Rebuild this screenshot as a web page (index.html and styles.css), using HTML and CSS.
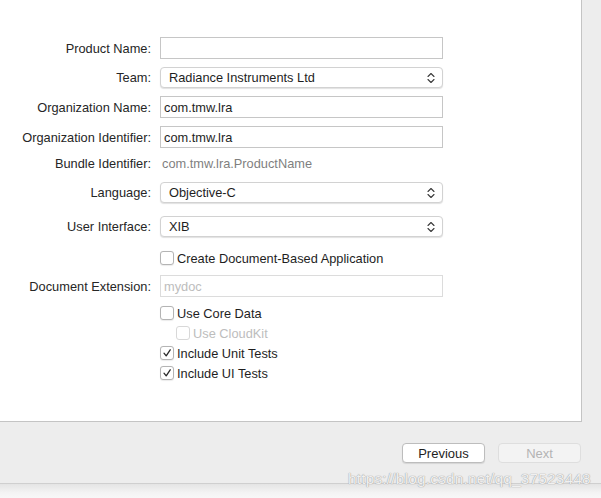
FILE: index.html
```html
<!DOCTYPE html>
<html>
<head>
<meta charset="utf-8">
<link rel="stylesheet" href="styles.css">
</head>
<body>
<div class="window">
  <div class="panel">
    <div class="form">
      <div class="row r1"><span class="label">Product Name:</span><div class="field input"></div></div>
      <div class="row r2"><span class="label">Team:</span><div class="field popup"><span>Radiance Instruments Ltd</span><svg class="arrows" width="8" height="12" viewBox="0 0 8 12"><path d="M1 4.5 L4 1.5 L7 4.5 M1 7.5 L4 10.5 L7 7.5" fill="none" stroke="#3a3a3a" stroke-width="1.1" stroke-linecap="round" stroke-linejoin="round"/></svg></div></div>
      <div class="row r3"><span class="label">Organization Name:</span><div class="field input">com.tmw.lra</div></div>
      <div class="row r4"><span class="label">Organization Identifier:</span><div class="field input">com.tmw.lra</div></div>
      <div class="row r5"><span class="label">Bundle Identifier:</span><div class="field static">com.tmw.lra.ProductName</div></div>
      <div class="row r6"><span class="label">Language:</span><div class="field popup"><span>Objective-C</span><svg class="arrows" width="8" height="12" viewBox="0 0 8 12"><path d="M1 4.5 L4 1.5 L7 4.5 M1 7.5 L4 10.5 L7 7.5" fill="none" stroke="#3a3a3a" stroke-width="1.1" stroke-linecap="round" stroke-linejoin="round"/></svg></div></div>
      <div class="row r7"><span class="label">User Interface:</span><div class="field popup"><span>XIB</span><svg class="arrows" width="8" height="12" viewBox="0 0 8 12"><path d="M1 4.5 L4 1.5 L7 4.5 M1 7.5 L4 10.5 L7 7.5" fill="none" stroke="#3a3a3a" stroke-width="1.1" stroke-linecap="round" stroke-linejoin="round"/></svg></div></div>
      <div class="row r8"><span class="label"></span><div class="check"><span class="box"></span><span>Create Document-Based Application</span></div></div>
      <div class="row r9"><span class="label">Document Extension:</span><div class="field input disabled">mydoc</div></div>
      <div class="row r10"><span class="label"></span><div class="check"><span class="box"></span><span>Use Core Data</span></div></div>
      <div class="row r11"><span class="label"></span><div class="check sub disabled"><span class="box"></span><span>Use CloudKit</span></div></div>
      <div class="row r12"><span class="label"></span><div class="check"><span class="box checked"><svg width="10" height="10" viewBox="0 0 10 10"><path d="M2 5.2 L4.2 7.8 L8.2 1.8" fill="none" stroke="#2a2a2a" stroke-width="1.3" stroke-linecap="round" stroke-linejoin="round"/></svg></span><span>Include Unit Tests</span></div></div>
      <div class="row r13"><span class="label"></span><div class="check"><span class="box checked"><svg width="10" height="10" viewBox="0 0 10 10"><path d="M2 5.2 L4.2 7.8 L8.2 1.8" fill="none" stroke="#2a2a2a" stroke-width="1.3" stroke-linecap="round" stroke-linejoin="round"/></svg></span><span>Include UI Tests</span></div></div>
    </div>
  </div>
  <div class="footer">
    <button class="btn">Previous</button>
    <button class="btn off">Next</button>
  </div>
  <div class="shade"></div>
  <div class="watermark">https://blog.csdn.net/qq_37523448</div>
</div>
</body>
</html>
```
FILE: styles.css
```css
* { box-sizing: border-box; }
html, body { margin: 0; padding: 0; }
body {
  width: 601px;
  height: 498px;
  overflow: hidden;
  background: #f6f6f6;
  font-family: "Liberation Sans", Arial, sans-serif;
  font-size: 12.8px;
  color: #262626;
}
.window {
  position: relative;
  width: 601px;
  height: 498px;
  background: #ededed;
}
.panel {
  width: 582px;
  height: 422px;
  background: #ffffff;
  border-right: 1px solid #c4c4c4;
  border-bottom: 1px solid #c4c4c4;
}
.form {
  display: flex;
  flex-direction: column;
  padding-top: 37px;
}
.row {
  display: grid;
  grid-template-columns: 151px 283px;
  column-gap: 9px;
  align-items: center;
}
.label {
  text-align: right;
  white-space: nowrap;
}
.r1 { height: 22px; }
.r2 { height: 21px; margin-top: 8px; }
.r3 { height: 22px; margin-top: 8px; }
.r4 { height: 22px; margin-top: 8px; }
.r5 { height: 20px; margin-top: 5px; }
.r6 { height: 21px; margin-top: 9px; }
.r7 { height: 21px; margin-top: 13px; }
.r8 { height: 20px; margin-top: 11px; }
.r9 { height: 22px; margin-top: 7px; }
.r10 { height: 20px; margin-top: 6px; }
.r11, .r12, .r13 { height: 20px; }
.field { height: 100%; display: flex; align-items: center; }
.input {
  border: 1px solid #c6c6c6;
  background: #fff;
  padding-left: 3px;
  color: #1e1e1e;
}
.input.disabled {
  border-color: #dcdcdc;
  color: #bdbdbd;
}
.static { color: #7f7f7f; padding-left: 2px; }
.popup {
  border: 1px solid #d2d2d2;
  border-radius: 4px;
  background: #fff;
  box-shadow: 0 1px 1px rgba(0,0,0,0.12);
  padding: 0 7px 0 8px;
  justify-content: space-between;
  color: #1e1e1e;
}
.check {
  display: flex;
  align-items: center;
  gap: 3px;
  color: #1e1e1e;
}
.check.sub { padding-left: 16px; }
.check.disabled { color: #bdbdbd; }
.box {
  width: 14px;
  height: 14px;
  border: 1px solid #b4b4b4;
  border-radius: 3px;
  background: #fff;
  display: flex;
  align-items: center;
  justify-content: center;
  box-shadow: 0 0.5px 1px rgba(0,0,0,0.08);
}
.check.disabled .box { border-color: #d8d8d8; box-shadow: none; }
.footer {
  height: 62px;
  border-bottom: 1px solid #cfcfcf;
  display: flex;
  justify-content: flex-end;
  align-items: flex-start;
  gap: 13px;
  padding: 21px 20px 0 0;
}
.btn {
  width: 83px;
  height: 20px;
  border: 1px solid #bdbdbd;
  border-radius: 4px;
  background: #fff;
  font-family: "Liberation Sans", Arial, sans-serif;
  font-size: 13px;
  color: #1e1e1e;
  padding: 0;
  box-shadow: 0 1px 1px rgba(0,0,0,0.1);
}
.btn.off {
  background: #f3f3f3;
  border-color: #dedede;
  color: #b3b3b3;
  box-shadow: none;
}
.shade {
  height: 15px;
  background: linear-gradient(#e4e4e4, #f4f4f4 60%, #f8f8f8);
}
.watermark {
  position: absolute;
  left: 348px;
  top: 470px;
  font-size: 15.4px;
  letter-spacing: 0.2px;
  color: rgba(255,255,255,0.85);
  text-shadow: 0 0 1px #a0a0a0, 0 0 1px #a0a0a0;
  white-space: nowrap;
}
```
